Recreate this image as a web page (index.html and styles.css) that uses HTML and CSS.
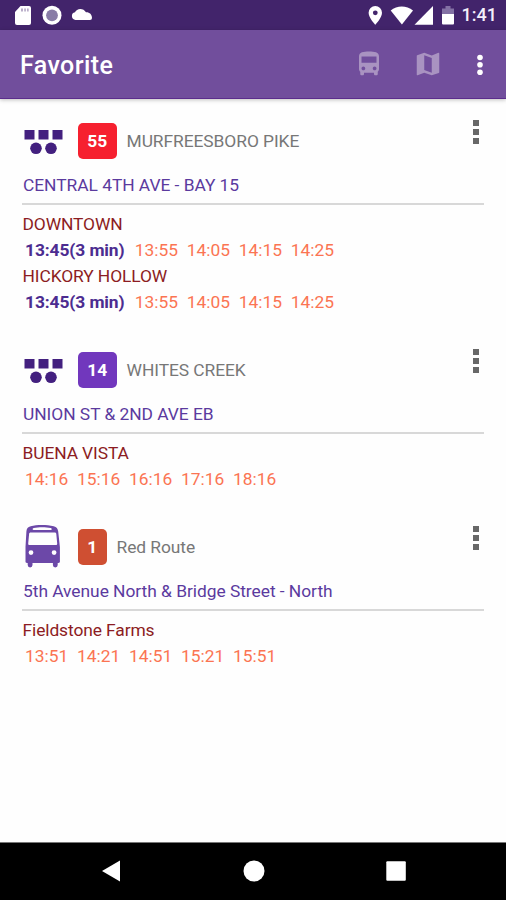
FILE: index.html
```html
<!DOCTYPE html>
<html lang="en">
<head>
  <meta charset="UTF-8" />
  <title>Favorite</title>
  <link rel="stylesheet" href="styles.css">
</head>
<body>

  <div class="status-bar">
    <svg width="100" height="30" viewBox="0 0 100 30">
      <path fill="#fff" d="M20.500 6H29a2 2 0 0 1 2 2v15a2 2 0 0 1-2 2H17a2 2 0 0 1-2-2V12z" />
      <path fill="#b9adc9" d="M21 8.500h2v3h-2zM24.200 8.500h1.700v3h-1.700zM27 8.500h1.700v3H27z" />
      <circle cx="52" cy="15.300" r="9.500" fill="#fff" />
      <circle cx="52" cy="15.300" r="5.900" fill="#887ca6" />
      <path fill="#fff" d="M75.500 20a3.900 3.900 0 0 1-.5-7.700C76.500 8 83.500 7.500 86 12.300c3.500-.2 6 2.200 6 5.700a2 2 0 0 1-2 2z" />
    </svg>
    <div class="status-right">
      <svg width="96" height="30" viewBox="364 0 96 30">
        <path fill="#fff" fill-rule="evenodd" d="M375.300 6a6.700 6.700 0 0 0-6.700 6.700c0 5 6.700 12 6.700 12s6.700-7 6.700-12A6.700 6.700 0 0 0 375.300 6zm0 4.400a2.400 2.400 0 1 1 0 4.800 2.400 2.400 0 0 1 0-4.800z" />
        <path fill="#fff" d="M390.700 10.500C397 5 406.500 5 413 10.500L401.900 24.500z" />
        <path fill="#fff" d="M433 6v18.700h-18.500z" />
        <path fill="#8371a4" d="M442 14V8.500h3.500V6h5v2.500h3.500V14z" />
        <path fill="#fff" d="M442 14h12v9.500a1 1 0 0 1-1 1h-10a1 1 0 0 1-1-1z" />
      </svg>
      <span class="clock">1:41</span>
    </div>
  </div>

  <header class="app-bar">
    <h1>Favorite</h1>
    <div class="actions">
      <svg class="action" width="30" height="30" viewBox="0 0 24 24">
        <path d="M4 16c0 .88.39 1.670 1 2.220V20c0 .55.45 1 1 1h1c.55 0 1-.45 1-1v-1h8v1c0 .55.45 1 1 1h1c.55 0 1-.45 1-1v-1.780c.61-.55 1-1.340 1-2.220V6c0-3.500-3.580-4-8-4s-8 .5-8 4v10zm3.500 1c-.83 0-1.500-.67-1.500-1.500S6.670 14 7.500 14s1.500.67 1.500 1.500S8.330 17 7.500 17zm9 0c-.83 0-1.500-.67-1.500-1.500s.67-1.500 1.500-1.500 1.500.67 1.500 1.500-.67 1.500-1.500 1.500zm1.500-6H6V6h12v5z" />
      </svg>
      <svg class="action" width="30" height="30" viewBox="0 0 24 24">
        <path d="M20.500 3l-.16.03L15 5.100 9 3 3.360 4.900c-.21.07-.36.25-.36.48V20.500c0 .28.22.5.5.5l.16-.03L9 18.900l6 2.100 5.640-1.900c.21-.07.36-.25.36-.48V3.500c0-.28-.22-.5-.5-.5zM15 19l-6-2.110V5l6 2.110V19z" />
      </svg>
      <svg class="more" width="6" height="22" viewBox="0 0 6 22">
        <circle cx="3" cy="3.500" r="2.800" />
        <circle cx="3" cy="10.800" r="2.800" />
        <circle cx="3" cy="18.200" r="2.800" />
      </svg>
    </div>
  </header>

  <main class="stops">
    <section class="stop">
      <div class="route">
        <svg class="agency" width="42" height="52" viewBox="0 0 42 52">
          <path d="M2.500 15h10v9.500h-10zM16.500 15h10v9.500h-10zM30.500 15h10v9.500h-10z" />
          <circle cx="14" cy="33.300" r="5.800" />
          <circle cx="29" cy="33.300" r="5.800" />
        </svg>
        <span class="badge red">55</span>
        <span class="route-name">MURFREESBORO PIKE</span>
        <div class="menu"><i></i><i></i><i></i></div>
      </div>
      <div class="stop-name">CENTRAL 4TH AVE - BAY 15</div>
      <div class="direction">DOWNTOWN</div>
      <div class="times"><b>13:45(3 min)</b><span>13:55</span><span>14:05</span><span>14:15</span><span>14:25</span></div>
      <div class="direction">HICKORY HOLLOW</div>
      <div class="times"><b>13:45(3 min)</b><span>13:55</span><span>14:05</span><span>14:15</span><span>14:25</span></div>
    </section>

    <section class="stop">
      <div class="route">
        <svg class="agency" width="42" height="52" viewBox="0 0 42 52">
          <path d="M2.500 15h10v9.500h-10zM16.500 15h10v9.500h-10zM30.500 15h10v9.500h-10z" />
          <circle cx="14" cy="33.300" r="5.800" />
          <circle cx="29" cy="33.300" r="5.800" />
        </svg>
        <span class="badge purple">14</span>
        <span class="route-name">WHITES CREEK</span>
        <div class="menu"><i></i><i></i><i></i></div>
      </div>
      <div class="stop-name">UNION ST &amp; 2ND AVE EB</div>
      <div class="direction">BUENA VISTA</div>
      <div class="times"><span>14:16</span><span>15:16</span><span>16:16</span><span>17:16</span><span>18:16</span></div>
    </section>

    <section class="stop">
      <div class="route">
        <svg class="bus" width="42" height="52" viewBox="0.300 0.500 42 52">
          <path fill-rule="evenodd" d="M9 5.800C15 4 25 4 32 5.800c3 .8 4 2.200 4.500 5.200l1.700 15.500V41c0 1-.5 1.400-1.500 1.400H36V44.500a2.300 2.300 0 0 1-4.800 0v-2.100H10.800v2.100a2.300 2.300 0 0 1-4.800 0v-2.100h-.7c-1 0-1.500-.4-1.500-1.400V26.500L4.700 11C5 8 6 6.600 9 5.800z
            M12 7.500c-1.500.3-1.500 1.800 0 2h17c1.500-.2 1.500-1.700 0-2-5-1-12-1-17 0z
            M9 12c-1 0-1.500.5-1.600 1.500l-.9 9.500c0 1 .4 1.500 1.500 1.500h26c1.100 0 1.500-.5 1.500-1.500l-.9-9.500c-.1-1-.6-1.500-1.600-1.500z
            M9.300 29.700a2.400 2.400 0 1 0 0 4.800 2.400 2.400 0 0 0 0-4.800z
            M32.400 29.700a2.400 2.400 0 1 0 0 4.800 2.400 2.400 0 0 0 0-4.800z" />
        </svg>
        <span class="badge orange">1</span>
        <span class="route-name">Red Route</span>
        <div class="menu"><i></i><i></i><i></i></div>
      </div>
      <div class="stop-name">5th Avenue North &amp; Bridge Street - North</div>
      <div class="direction">Fieldstone Farms</div>
      <div class="times"><span>13:51</span><span>14:21</span><span>14:51</span><span>15:21</span><span>15:51</span></div>
    </section>
  </main>

  <nav class="nav-bar">
    <svg width="22" height="24" viewBox="0 0 22 24"><path d="M20 1.500v21L2 12z" /></svg>
    <svg width="22" height="24" viewBox="0 0 22 24"><circle cx="11" cy="12" r="10.500" /></svg>
    <svg width="22" height="24" viewBox="0 0 22 24"><rect x="1.300" y="2.300" width="19.500" height="19.500" rx="1" /></svg>
  </nav>

</body>
</html>
```
FILE: styles.css
```css
body {
  margin: 0;
  height: 900px;
  display: flex;
  flex-direction: column;
  overflow: hidden;
  background: #fefefe;
  font-family: Roboto, sans-serif;
  font-size: 17.4px;
}

svg {
  display: block;
  flex: none;
}

.status-bar {
  height: 30px;
  display: flex;
  justify-content: space-between;
  background: #42246b;
}

.status-right {
  display: flex;
  align-items: center;
  padding-right: 9px;
}

.clock {
  width: 37px;
  text-align: right;
  color: #f4effa;
  font-size: 18px;
  font-weight: 500;
  line-height: 32px;
}

.app-bar {
  height: 68px;
  display: flex;
  align-items: center;
  justify-content: space-between;
  padding: 0 23px 0 20px;
  background: #714e9c;
  border-bottom: 1px solid #5b2d8c;
  box-shadow: 0 1px 4px rgba(0,0,0,0.25);
}

.app-bar h1 {
  margin: 3px 0 0;
  color: #fff;
  font-size: 25px;
  font-weight: 500;
  letter-spacing: 0.4px;
}

.actions {
  display: flex;
  align-items: center;
  gap: 29px;
}

.action {
  fill: #a993c1;
}

.more {
  fill: #fff;
  margin: 1px 0 0 5px;
}

.stops {
  flex: 1;
  padding: 16px 22px 0;
}

.stop {
  margin-bottom: 29px;
}

.route {
  height: 52px;
  display: flex;
  align-items: center;
}

.agency {
  fill: #43207f;
}

.bus {
  fill: #6c48a8;
}

.badge {
  height: 36px;
  line-height: 37px;
  padding: 0 9.7px;
  margin: -1px 9.7px 0 13.5px;
  border-radius: 5px;
  color: #fff;
  font-weight: bold;
}

.red {
  background: #f6202f;
}

.purple {
  background: #7137bd;
}

.orange {
  background: #cf4f32;
}

.route-name {
  color: #777;
  letter-spacing: -0.07px;
}

.menu {
  align-self: flex-start;
  display: flex;
  flex-direction: column;
  gap: 3px;
  margin: 5px 5px 0 auto;
}

.menu i {
  width: 6px;
  height: 6px;
  background: #686868;
}

.stop-name {
  height: 36px;
  line-height: 36px;
  padding-left: 1px;
  margin-bottom: 6px;
  border-bottom: 2px solid #d8d8d8;
  color: #5b3a9e;
  letter-spacing: -0.04px;
}

.direction {
  height: 26px;
  line-height: 26px;
  padding-left: 0.5px;
  color: #8c1c22;
  letter-spacing: -0.1px;
}

.times {
  display: flex;
  gap: 8.7px;
  height: 26px;
  line-height: 26px;
  padding-left: 3px;
  color: #fb7452;
}

.times b {
  margin-right: 1.5px;
  color: #4c2c90;
  letter-spacing: -0.1px;
}

.nav-bar {
  height: 58px;
  display: flex;
  align-items: center;
  justify-content: space-between;
  padding: 0 99px 2px 100px;
  box-sizing: border-box;
  border-top: 1px solid #777;
  background: #000;
}

.nav-bar svg {
  fill: #fff;
}
```
